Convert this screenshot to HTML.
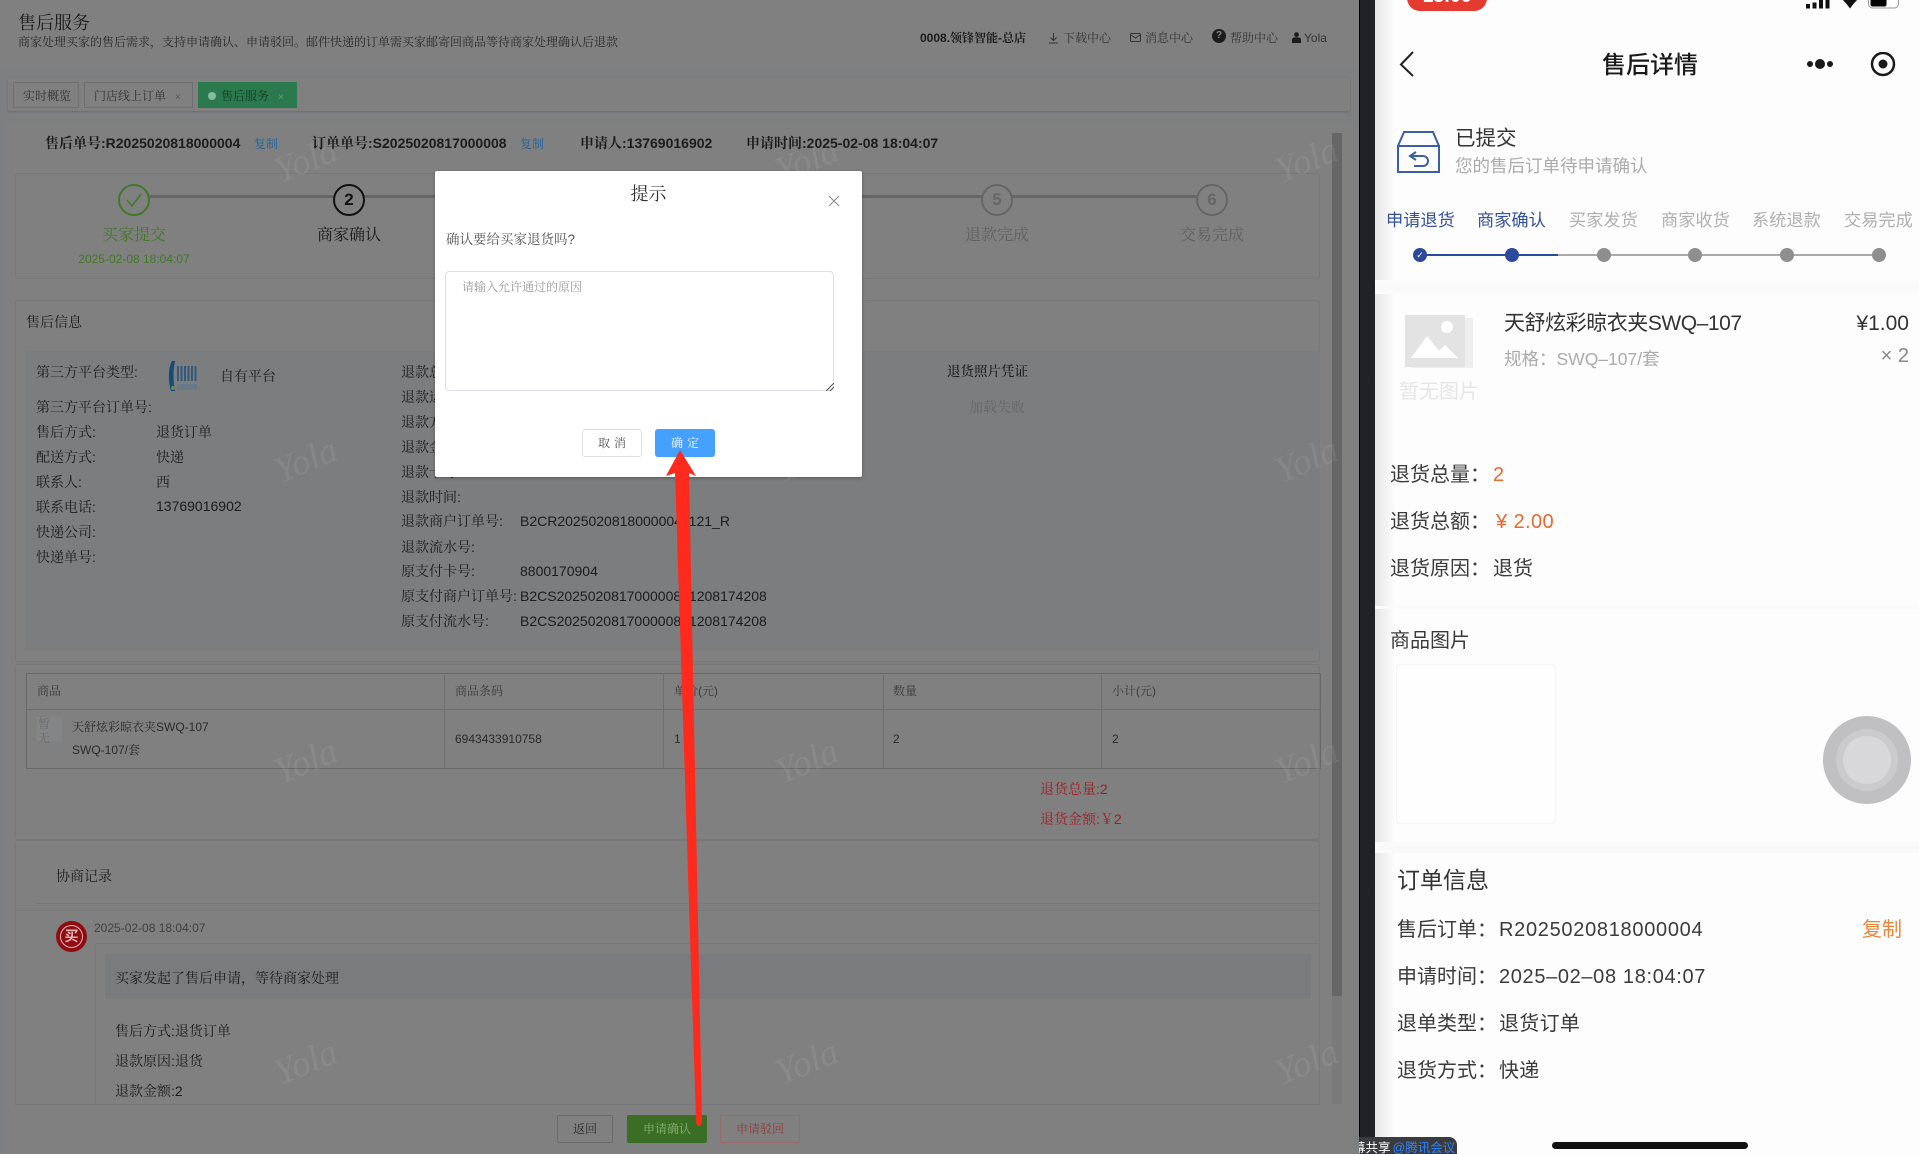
<!DOCTYPE html>
<html lang="zh-CN"><head><meta charset="utf-8"><title>售后服务</title>
<style>
*{box-sizing:border-box}
html,body{margin:0;padding:0;width:1919px;height:1154px;overflow:hidden;background:#808080}
body{position:relative;font-family:"Liberation Sans","Noto Serif CJK SC",serif;color:#1c1c1c}
.t{position:absolute;white-space:nowrap;line-height:20px;font-size:14px}
.b{position:absolute}
.s12{font-size:12px}
.bd{font-weight:700}
.ph{font-family:"Liberation Sans","Noto Sans CJK SC",sans-serif;color:#3b3b3b;font-size:20px;line-height:28px}
.wm{position:absolute;font-family:"Liberation Serif",serif;font-style:italic;font-size:37px;line-height:44px;color:rgba(255,255,255,.075);transform:rotate(-22deg);z-index:30;transform-origin:center;width:80px;text-align:center}
.circ{position:absolute;width:32px;height:32px;border-radius:50%;border:2px solid #666;background:#808080;color:#666;text-align:center;line-height:27px;font-size:17px;font-weight:700;font-family:"Liberation Sans",sans-serif}
.lbl{text-align:center;font-size:16px;width:120px}
.tab{position:absolute;top:82px;height:26px;border:1px solid #6f6f6f;font-size:12px;line-height:26px;color:#333;padding-left:9px;background:#808080}
.dot{position:absolute;width:14px;height:14px;border-radius:50%;background:#8e8e8e;top:248px}
</style></head><body>

<!-- left admin page -->
<div class="b" style="left:0;top:0;width:1359px;height:1154px;background:#7e7f80;overflow:hidden">
  <div class="b" style="left:0;top:0;width:1359px;height:68px;background:#808080"></div>
  <div class="t" style="left:18px;top:11px;font-size:18px;line-height:24px">售后服务</div>
  <div class="t s12" style="left:18px;top:32px;color:#2a2a2a">商家处理买家的售后需求&#65292;支持申请确认、申请驳回。邮件快递的订单需买家邮寄回商品等待商家处理确认后退款</div>
  <div class="t s12 bd" style="left:920px;top:28px">0008.领锋智能-总店</div>
  <svg class="b" style="left:1048px;top:32px" width="11" height="12" viewBox="0 0 11 12" fill="none" stroke="#333"><path d="M5.500 1v7M2.500 5.500l3 3 3-3M1 11h9"/></svg>
  <div class="t s12" style="left:1063px;top:28px;color:#333">下载中心</div>
  <svg class="b" style="left:1130px;top:32px" width="11" height="11" viewBox="0 0 11 11" fill="none" stroke="#333"><rect x=".5" y="1.500" width="10" height="8" rx="1"/><path d="M1 3l4.500 3L10 3"/></svg>
  <div class="t s12" style="left:1145px;top:28px;color:#333">消息中心</div>
  <div class="b" style="left:1212px;top:29px;width:14px;height:14px;border-radius:50%;background:#1c1c1c;color:#888;font:bold 10px/14px 'Liberation Sans',sans-serif;text-align:center">?</div>
  <div class="t s12" style="left:1230px;top:28px;color:#333">帮助中心</div>
  <svg class="b" style="left:1292px;top:32px" width="9" height="11" viewBox="0 0 9 11" fill="#1c1c1c"><circle cx="4.500" cy="2.600" r="2.400"/><path d="M0 11V7.500C0 6 1.500 5.200 4.500 5.200S9 6 9 7.500V11z"/></svg>
  <div class="t s12" style="left:1304px;top:28px;color:#333">Yola</div>

  <!-- tab bar -->
  <div class="b" style="left:8px;top:78px;width:1342px;height:33px;background:#808080;border-radius:2px;box-shadow:0 1px 2px rgba(0,0,0,.16)"></div>
  <div class="tab" style="left:13px;width:66px">实时概览</div>
  <div class="tab" style="left:84px;width:109px">门店线上订单<span style="margin-left:9px;font-size:10px;color:#555">×</span></div>
  <div class="tab" style="left:198px;width:99px;background:#2b7a4e;border-color:#2b7a4e;color:#123a24;padding-left:9px"><span style="display:inline-block;width:8px;height:8px;border-radius:50%;background:#8ab9a0;margin-right:5px"></span>售后服务<span style="margin-left:9px;font-size:10px;color:#5aa57c">×</span></div>

  <!-- main card -->
  <div class="b" style="left:5px;top:122px;width:1349px;height:1040px;background:#808080;border-radius:3px"></div>
  <div class="t bd" style="left:45px;top:133px">售后单号:R2025020818000004</div>
  <div class="t s12" style="left:254px;top:134px;color:#1c5f9c">复制</div>
  <div class="t bd" style="left:312px;top:133px">订单单号:S2025020817000008</div>
  <div class="t s12" style="left:520px;top:134px;color:#1c5f9c">复制</div>
  <div class="t bd" style="left:580px;top:133px">申请人:13769016902</div>
  <div class="t bd" style="left:746px;top:133px">申请时间:2025-02-08 18:04:07</div>

  <!-- steps -->
  <div class="b" style="left:15px;top:173px;width:1305px;height:106px;border:1px solid #777879;border-radius:3px"></div>
  <div class="b" style="left:134px;top:195px;width:1078px;height:3px;background:#666"></div>
  <div class="circ" style="left:118px;top:184px;border-color:#42782a"></div>
  <svg class="b" style="left:125px;top:192px" width="18" height="16" viewBox="0 0 18 16" fill="none" stroke="#42782a" stroke-width="1.500"><path d="M2 8l5 6L16 2"/></svg>
  <div class="circ" style="left:333px;top:184px;border-color:#111;color:#111;border-width:2.500px">2</div>
  <div class="circ" style="left:981px;top:184px">5</div>
  <div class="circ" style="left:1196px;top:184px">6</div>
  <div class="t lbl" style="left:74px;top:226px;color:#42782a">买家提交</div>
  <div class="t s12" style="left:74px;top:249px;width:120px;text-align:center;color:#42782a;font-family:'Liberation Sans',sans-serif">2025-02-08 18:04:07</div>
  <div class="t lbl" style="left:289px;top:226px;color:#1a1a1a">商家确认</div>
  <div class="t lbl" style="left:937px;top:226px;color:#606060">退款完成</div>
  <div class="t lbl" style="left:1152px;top:226px;color:#606060">交易完成</div>

  <!-- after sale info -->
  <div class="b" style="left:15px;top:300px;width:1305px;height:362px;border:1px solid #777879;border-radius:3px"></div>
  <div class="t" style="left:26px;top:312px">售后信息</div>
  <div class="b" style="left:25px;top:351px;width:1295px;height:299px;background:#7c7d7f"></div>
  <div class="t" style="left:36px;top:362px">第三方平台类型:</div>
  <svg class="b" style="left:165px;top:360px" width="34" height="32" viewBox="0 0 34 32"><path d="M7 1C3 8 3 22 6 31h4C8 22 8 10 10 1z" fill="#144c78"/><path d="M12 6h2v15h-2zM15.500 6h2v15h-2zM19 6h2v15h-2zM22.500 6h2v15h-2zM26 6h2v15h-2zM29.500 6h2v15h-2z" fill="#35597a"/><rect x="12" y="24" width="20" height="6" fill="#5c7a88" opacity=".7"/><circle cx="8" cy="28" r="2" fill="#6a8a50"/></svg>
  <div class="t" style="left:220px;top:366px">自有平台</div>
  <div class="t" style="left:36px;top:397px">第三方平台订单号:</div>
  <div class="t" style="left:36px;top:422px">售后方式:</div><div class="t" style="left:156px;top:422px">退货订单</div>
  <div class="t" style="left:36px;top:447px">配送方式:</div><div class="t" style="left:156px;top:447px">快递</div>
  <div class="t" style="left:36px;top:472px">联系人:</div><div class="t" style="left:156px;top:472px">西</div>
  <div class="t" style="left:36px;top:497px">联系电话:</div><div class="t" style="left:156px;top:496px">13769016902</div>
  <div class="t" style="left:36px;top:522px">快递公司:</div>
  <div class="t" style="left:36px;top:547px">快递单号:</div>

  <div class="t" style="left:401px;top:362px">退款总额:</div>
  <div class="t" style="left:401px;top:387px">退款运费:</div>
  <div class="t" style="left:401px;top:412px">退款方式:</div>
  <div class="t" style="left:401px;top:437px">退款金额:</div>
  <div class="t" style="left:401px;top:462px">退款卡号:</div>
  <div class="t" style="left:401px;top:487px">退款时间:</div>
  <div class="t" style="left:401px;top:511px">退款商户订单号:</div><div class="t" style="left:520px;top:511px">B2CR20250208180000041121_R</div>
  <div class="t" style="left:401px;top:537px">退款流水号:</div>
  <div class="t" style="left:401px;top:561px">原支付卡号:</div><div class="t" style="left:520px;top:561px">8800170904</div>
  <div class="t" style="left:401px;top:586px">原支付商户订单号:</div><div class="t" style="left:520px;top:586px">B2CS202502081700000861208174208</div>
  <div class="t" style="left:401px;top:611px">原支付流水号:</div><div class="t" style="left:520px;top:611px">B2CS202502081700000861208174208</div>
  <div class="t bd" style="left:947px;top:362px;font-size:13.500px;font-weight:500">退货照片凭证</div>
  <div class="t" style="left:969px;top:397px;color:#666">加载失败</div>

  <!-- table -->
  <div class="b" style="left:15px;top:664px;width:1305px;height:176px;border:1px solid #777879;border-radius:3px"></div>
  <div class="b" style="left:26px;top:673px;width:1295px;height:96px;border:1px solid #686868"></div>
  <div class="b" style="left:26px;top:709px;width:1295px;height:1px;background:#6e6e6e"></div>
  <div class="b" style="left:444px;top:673px;width:1px;height:96px;background:#6e6e6e"></div>
  <div class="b" style="left:663px;top:673px;width:1px;height:96px;background:#6e6e6e"></div>
  <div class="b" style="left:883px;top:673px;width:1px;height:96px;background:#6e6e6e"></div>
  <div class="b" style="left:1101px;top:673px;width:1px;height:96px;background:#6e6e6e"></div>
  <div class="t s12" style="left:37px;top:681px;color:#3a3a3a">商品</div>
  <div class="t s12" style="left:455px;top:681px;color:#3a3a3a">商品条码</div>
  <div class="t s12" style="left:674px;top:681px;color:#3a3a3a">单价(元)</div>
  <div class="t s12" style="left:893px;top:681px;color:#3a3a3a">数量</div>
  <div class="t s12" style="left:1112px;top:681px;color:#3a3a3a">小计(元)</div>
  <div class="b" style="left:37px;top:717px;width:25px;height:24px;background:#848587;color:#6b6b6b;font-size:12px;line-height:14px;padding-left:1px">暂<br>无</div>
  <div class="t s12" style="left:72px;top:717px;color:#2a2a2a">天舒炫彩晾衣夹SWQ-107</div>
  <div class="t s12" style="left:72px;top:740px;color:#2a2a2a">SWQ-107/套</div>
  <div class="t s12" style="left:455px;top:729px;color:#2a2a2a">6943433910758</div>
  <div class="t s12" style="left:674px;top:729px;color:#2a2a2a">1</div>
  <div class="t s12" style="left:893px;top:729px;color:#2a2a2a">2</div>
  <div class="t s12" style="left:1112px;top:729px;color:#2a2a2a">2</div>
  <div class="t" style="left:1040px;top:779px;color:#a01c24;font-size:14px">退货总量:2</div>
  <div class="t" style="left:1040px;top:809px;color:#a01c24;font-size:14px">退货金额:&#65509;2</div>

  <!-- negotiation -->
  <div class="b" style="left:15px;top:840px;width:1305px;height:280px;border:1px solid #777879;border-bottom:0;border-radius:3px"></div>
  <div class="t" style="left:56px;top:866px">协商记录</div>
  <div class="b" style="left:36px;top:903px;width:1284px;height:1px;background:#777879"></div>
  <div class="b" style="left:15px;top:910px;width:1305px;height:1px;background:#777879"></div>
  <div class="b" style="left:56px;top:921px;width:31px;height:31px;border-radius:50%;background:#8e0c12"></div>
  <div class="b" style="left:60px;top:925px;width:23px;height:23px;border-radius:50%;border:1.500px solid #e6b4b6;color:#e6b4b6;font-size:14px;line-height:20px;text-align:center;font-family:'Noto Sans CJK SC',sans-serif;font-weight:700">买</div>
  <div class="t s12" style="left:94px;top:918px;color:#3f3f3f;font-family:'Liberation Sans',sans-serif">2025-02-08 18:04:07</div>
  <div class="b" style="left:95px;top:943px;width:1225px;height:165px;border:1px solid #777879;border-radius:3px"></div>
  <div class="b" style="left:105px;top:954px;width:1206px;height:45px;background:#7a7b7d;border-radius:2px"></div>
  <div class="t" style="left:115px;top:968px">买家发起了售后申请&#65292;等待商家处理</div>
  <div class="t" style="left:115px;top:1021px">售后方式:退货订单</div>
  <div class="t" style="left:115px;top:1051px">退款原因:退货</div>
  <div class="t" style="left:115px;top:1081px">退款金额:2</div>

  <!-- footer -->
  <div class="b" style="left:15px;top:1104px;width:1305px;height:50px;background:#808080;border-top:1px solid #767778"></div>
  <div class="b" style="left:557px;top:1115px;width:56px;height:28px;border:1px solid #6c6c6c;border-radius:2px;font-size:12px;line-height:26px;text-align:center;color:#2a2a2a">返回</div>
  <div class="b" style="left:627px;top:1115px;width:80px;height:28px;background:#3a6e24;border-radius:2px;font-size:12px;line-height:28px;text-align:center;color:#8fb37e">申请确认</div>
  <div class="b" style="left:720px;top:1115px;width:80px;height:28px;border:1px solid #986a6a;border-radius:2px;font-size:12px;line-height:26px;text-align:center;color:#963838">申请驳回</div>

  <!-- scrollbar -->
  <div class="b" style="left:1332px;top:133px;width:10px;height:971px;background:#7a7a7b"></div>
  <div class="b" style="left:1332px;top:133px;width:10px;height:863px;background:#666"></div>
</div>

<!-- modal -->
<div class="b" style="left:435px;top:171px;width:427px;height:306px;background:#fff;border-radius:2px;box-shadow:0 1px 3px rgba(0,0,0,.3);z-index:5">
  <div class="t" style="left:0;width:427px;text-align:center;top:11px;font-size:18px;line-height:24px;color:#303030">提示</div>
  <svg class="b" style="left:393px;top:24px" width="12" height="12" viewBox="0 0 12 12" stroke="#888" fill="none"><path d="M1 1l10 10M11 1L1 11"/></svg>
  <div class="t" style="left:11px;top:59px;font-size:13.500px;color:#555">确认要给买家退货吗?</div>
  <div class="b" style="left:10px;top:100px;width:389px;height:120px;border:1px solid #dcdfe6;border-radius:4px"></div>
  <div class="t s12" style="left:27px;top:106px;color:#999">请输入允许通过的原因</div>
  <svg class="b" style="left:391px;top:212px" width="8" height="8" viewBox="0 0 8 8" stroke="#555" fill="none"><path d="M0 8L8 0M4 8L8 4"/></svg>
  <div class="b" style="left:147px;top:258px;width:60px;height:28px;border:1px solid #dcdfe6;border-radius:3px;font-size:12px;line-height:26px;text-align:center;color:#555;letter-spacing:4px;text-indent:4px">取消</div>
  <div class="b" style="left:220px;top:258px;width:60px;height:28px;background:#46a0ff;border-radius:3px;font-size:12px;line-height:28px;text-align:center;color:#fff;letter-spacing:4px;text-indent:4px">确定</div>
</div>

<!-- watermarks -->
<div class="wm" style="left:266px;top:139px">Yola</div><div class="wm" style="left:767px;top:139px">Yola</div><div class="wm" style="left:1267px;top:139px">Yola</div>
<div class="wm" style="left:266px;top:439px">Yola</div><div class="wm" style="left:767px;top:439px">Yola</div><div class="wm" style="left:1267px;top:439px">Yola</div>
<div class="wm" style="left:266px;top:740px">Yola</div><div class="wm" style="left:767px;top:740px">Yola</div><div class="wm" style="left:1267px;top:740px">Yola</div>
<div class="wm" style="left:266px;top:1041px">Yola</div><div class="wm" style="left:767px;top:1041px">Yola</div><div class="wm" style="left:1267px;top:1041px">Yola</div>

<!-- bezel -->
<div class="b" style="left:1359px;top:0;width:16px;height:1154px;background:#212226;border-left:1px solid #000"></div>

<!-- phone -->
<div class="b" style="left:1375px;top:0;width:544px;height:1154px;background:#fdfdfe;overflow:hidden">
  <div class="b" style="left:0;top:0;width:20px;height:1154px;background:linear-gradient(90deg,#e6e6e6,#fdfdfe)"></div>
  <div class="b" style="left:32px;top:-20px;width:80px;height:31px;background:#e43a30;border-radius:13px;color:#fff;font:bold 19px/34px 'Liberation Sans',sans-serif;text-align:center">18:06</div>
  <svg class="b" style="left:431px;top:0" width="94" height="12" viewBox="0 0 94 12"><path d="M0 4h4v4.500H0zM6.500 2.500h4v6h-4zM13 0h4v8.500h-4zM19.500 0h4v8.500h-4z" fill="#111"/><path d="M37 0h14l-4 4.500-3 4-3-4z" fill="#111"/><rect x="62.500" y="-6" width="30" height="14" rx="4" fill="#fff" stroke="#999"/><rect x="64.500" y="-5" width="16" height="11.500" rx="2" fill="#000"/></svg>
  <svg class="b" style="left:24px;top:50px" width="16" height="28" viewBox="0 0 16 28" fill="none" stroke="#222" stroke-width="2"><path d="M14 2L2 14.500 14 26"/></svg>
  <div class="t ph" style="left:0;width:550px;text-align:center;top:51px;font-size:24px;line-height:30px;font-weight:500;color:#1a1a1a">售后详情</div>
  <svg class="b" style="left:431px;top:52px" width="90" height="26" viewBox="0 0 90 26" fill="#1a1a1a"><circle cx="4" cy="12" r="3"/><circle cx="14" cy="12" r="5"/><circle cx="24" cy="12" r="3"/><circle cx="77" cy="12" r="11" fill="none" stroke="#1a1a1a" stroke-width="2.500"/><circle cx="77" cy="12" r="4.500"/></svg>

  <svg class="b" style="left:21px;top:130px" width="46" height="44" viewBox="0 0 46 44" fill="none" stroke="#3c5ea6" stroke-width="2"><path d="M2 16L8 2h29l6 14"/><path d="M2 16h41v26H2z"/><path d="M20 22l-6 4 6 4M14 26h13a4.500 4.500 0 0 1 0 10h-9"/></svg>
  <div class="t ph" style="left:80px;top:125px;font-size:20.500px;color:#333">已提交</div>
  <div class="t ph" style="left:80px;top:152px;font-size:17.500px;color:#ababab">您的售后订单待申请确认</div>

  <div class="t ph" style="left:11px;top:206px;font-size:17.200px;color:#33529c">申请退货</div>
  <div class="t ph" style="left:102px;top:206px;font-size:17.200px;color:#33529c">商家确认</div>
  <div class="t ph" style="left:194px;top:206px;font-size:17.200px;color:#b0b0b0">买家发货</div>
  <div class="t ph" style="left:286px;top:206px;font-size:17.200px;color:#b0b0b0">商家收货</div>
  <div class="t ph" style="left:377px;top:206px;font-size:17.200px;color:#b0b0b0">系统退款</div>
  <div class="t ph" style="left:469px;top:206px;font-size:17.200px;color:#b0b0b0">交易完成</div>
  <div class="b" style="left:45px;top:254px;width:459px;height:2px;background:#a9a9a9"></div>
  <div class="b" style="left:45px;top:254px;width:138px;height:2px;background:#2c4a9c"></div>
  <div class="dot" style="left:38px;background:#2c4a9c;color:#fff;font:9px/14px 'Liberation Sans','DejaVu Sans',sans-serif;text-align:center">✓</div>
  <div class="dot" style="left:130px;background:#2c4a9c"></div>
  <div class="dot" style="left:222px"></div><div class="dot" style="left:313px"></div><div class="dot" style="left:405px"></div><div class="dot" style="left:497px"></div>
  <div class="b" style="left:0;top:280px;width:544px;height:14px;background:linear-gradient(#fdfdfe,#f8f8f9,#fdfdfe)"></div>

  <svg class="b" style="left:28px;top:310px" width="72" height="62" viewBox="0 0 72 62"><rect x="8" y="8" width="62" height="50" fill="#efefef"/><rect x="2" y="5" width="60" height="52" fill="#e3e3e3"/><path d="M8 48l16-22 12 15 6-6 13 13z" fill="#fff"/><circle cx="44" cy="17" r="6" fill="#fff"/></svg>
  <div class="t ph" style="left:24px;top:378px;color:#e6e6e6">暂无图片</div>
  <div class="t ph" style="left:129px;top:310px;font-size:21px;color:#333;letter-spacing:-.45px">天舒炫彩晾衣夹SWQ–107</div>
  <div class="t ph" style="right:10px;top:310px;font-size:21px;color:#333">¥1.00</div>
  <div class="t ph" style="left:129px;top:345px;font-size:17.500px;color:#ababab">规格&#65306;SWQ–107/套</div>
  <div class="t ph" style="right:10px;top:342px;font-size:20px;color:#888">× 2</div>

  <div class="t ph" style="left:15px;top:461px">退货总量&#65306;</div><div class="t ph" style="left:118px;top:461px;color:#e9692c">2</div>
  <div class="t ph" style="left:15px;top:508px">退货总额&#65306;</div><div class="t ph" style="left:121px;top:508px;color:#e9692c;letter-spacing:.4px">¥ 2.00</div>
  <div class="t ph" style="left:15px;top:555px">退货原因&#65306;</div><div class="t ph" style="left:118px;top:555px">退货</div>
  <div class="b" style="left:0;top:606px;width:544px;height:3px;background:#fbfbfc"></div>
  <div class="t ph" style="left:15px;top:627px">商品图片</div>
  <div class="b" style="left:21px;top:664px;width:160px;height:160px;border:1px solid #f5f5f5;border-radius:3px;background:#fefefe"></div>
  <div class="b" style="left:448px;top:716px;width:88px;height:88px;border-radius:50%;background:#c0c0c2"></div>
  <div class="b" style="left:468px;top:736px;width:48px;height:48px;border-radius:50%;background:#d8d8da;box-shadow:0 0 0 7px #cbcbcd"></div>
  <div class="b" style="left:0;top:842px;width:544px;height:11px;background:#fafafb"></div>
  <div class="t ph" style="left:22px;top:866px;font-size:23px;color:#333">订单信息</div>
  <div class="t ph" style="left:22px;top:916px">售后订单&#65306;</div><div class="t ph" style="left:124px;top:916px;letter-spacing:.7px">R2025020818000004</div><div class="t ph" style="left:487px;top:916px;color:#e9863c">复制</div>
  <div class="t ph" style="left:22px;top:963px">申请时间&#65306;</div><div class="t ph" style="left:124px;top:963px;letter-spacing:.65px">2025–02–08 18:04:07</div>
  <div class="t ph" style="left:22px;top:1010px">退单类型&#65306;</div><div class="t ph" style="left:124px;top:1010px;letter-spacing:.3px">退货订单</div>
  <div class="t ph" style="left:22px;top:1057px">退货方式&#65306;</div><div class="t ph" style="left:124px;top:1057px;letter-spacing:.3px">快递</div>
  <div class="b" style="left:177px;top:1142px;width:196px;height:7px;background:#111;border-radius:4px"></div>
</div>

<!-- share tag -->
<div class="b" style="left:1359px;top:1137px;width:98px;height:17px;background:#3a3b3e;border-radius:0 8px 0 0;overflow:hidden;z-index:8">
  <div class="t" style="left:-6px;top:0;font:12.500px/22px 'Liberation Sans','Noto Sans CJK SC',sans-serif;color:#fff">幕共享<span style="color:#2b84ff;margin-left:2px">@腾讯会议</span></div>
</div>

<!-- red arrow -->
<svg class="b" style="left:0;top:0;z-index:40" width="1919" height="1154" viewBox="0 0 1919 1154"><path d="M680 450L696 476L689 473L702 1120Q702 1126 699 1126Q696 1126 696 1120L675 473L666 476Z" fill="#fe2a1e"/></svg>
</body></html>
